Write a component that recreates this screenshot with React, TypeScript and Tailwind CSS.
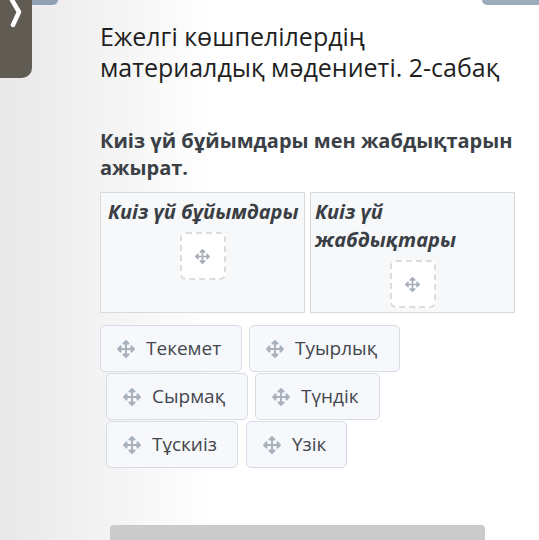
import { FaArrowsAlt } from 'react-icons/fa'

const rows = [
  { ml: 'ml-0', gap: 'gap-[7px]', chips: [{ t: 'Текемет', w: 'w-[142px]' }, { t: 'Туырлық', w: 'w-[151px]' }] },
  { ml: 'ml-[6px]', gap: 'gap-[7px]', chips: [{ t: 'Сырмақ', w: 'w-[142px]' }, { t: 'Түндік', w: 'w-[125px]' }] },
  { ml: 'ml-[6px]', gap: 'gap-[8px]', chips: [{ t: 'Тұскиіз', w: 'w-[132px]' }, { t: 'Үзік', w: 'w-[101px]' }] },
]

function Chip({ text, w }: { text: string; w: string }) {
  return (
    <div
      className={`${w} h-[47px] flex items-center gap-[11px] pl-[16px] rounded-[5px] border border-[#d6dce4] bg-[#f6f8fb] text-[19px] text-[#43474d]`}
    >
      <FaArrowsAlt className="w-[18px] h-[18px] text-[#a9b1bc]" />
      <span>{text}</span>
    </div>
  )
}

function DropZone() {
  return (
    <div className="w-[46px] h-[48px] rounded-[6px] border-2 border-dashed border-[#dcdcdc] bg-white flex items-center justify-center">
      <FaArrowsAlt className="w-[15px] h-[15px] text-[#a6aeb9]" />
    </div>
  )
}

export default function App() {
  return (
    <div
      className="relative w-[539px] h-[540px] overflow-hidden bg-gradient-to-r from-[#e8e8e8] via-white via-40% to-white"
      style={{ fontFamily: '"Open Sans", "Noto Sans", sans-serif' }}
    >
      {/* cropped chrome at the top */}
      <div className="absolute left-0 top-0 w-[32px] h-[78px] bg-[#605b53] rounded-br-[10px] flex justify-center">
        <svg width="16" height="30" viewBox="0 0 16 30" className="mt-[-2px]">
          <path d="M4 2 L11 14 L5 27" fill="none" stroke="white" strokeWidth="4.5" strokeLinecap="round" strokeLinejoin="round" />
        </svg>
      </div>
      <div className="absolute left-[32px] top-0 w-[26px] h-[5px] bg-[#8fa2b4] rounded-br-[5px]" />
      <div className="absolute right-0 top-0 w-[57px] h-[5px] bg-[#9aabbb] rounded-bl-[5px]" />

      <div className="pl-[100px] pt-[21px]">
        <h1 className="text-[25px] leading-[31px] font-normal text-[#1f1f1f]">
          Ежелгі көшпелілердің
          <br />
          материалдық мәдениеті. 2-сабақ
        </h1>

        <h2 className="mt-[44px] text-[20px] leading-[27px] font-bold text-[#3b3f46]">
          Киіз үй бұйымдары мен жабдықтарын
          <br />
          ажырат.
        </h2>

        <div className="mt-[11px] flex gap-[5px]">
          <div className="w-[205px] h-[121px] border border-[#d9dadb] bg-[#f7f8f9] flex flex-col items-center pt-[5px]">
            <div className="self-start pl-[7px] text-[20px] leading-[28px] font-bold italic text-[#3a3e45] whitespace-nowrap">
              Киіз үй бұйымдары
            </div>
            <div className="mt-[6px]">
              <DropZone />
            </div>
          </div>
          <div className="w-[205px] h-[121px] border border-[#d9dadb] bg-[#f7f8f9] flex flex-col items-center pt-[5px]">
            <div className="self-start pl-[4px] text-[20px] leading-[28px] font-bold italic text-[#3a3e45]">
              Киіз үй
              <br />
              жабдықтары
            </div>
            <div className="mt-[6px]">
              <DropZone />
            </div>
          </div>
        </div>

        <div className="mt-[12px] flex flex-col gap-[1px]">
          {rows.map((r, i) => (
            <div key={i} className={`flex ${r.ml} ${r.gap}`}>
              {r.chips.map((c) => (
                <Chip key={c.t} text={c.t} w={c.w} />
              ))}
            </div>
          ))}
        </div>
      </div>

      <div className="absolute left-[110px] bottom-0 w-[375px] h-[15px] bg-[#cbcbcb] rounded-t-[4px]" />
    </div>
  )
}
